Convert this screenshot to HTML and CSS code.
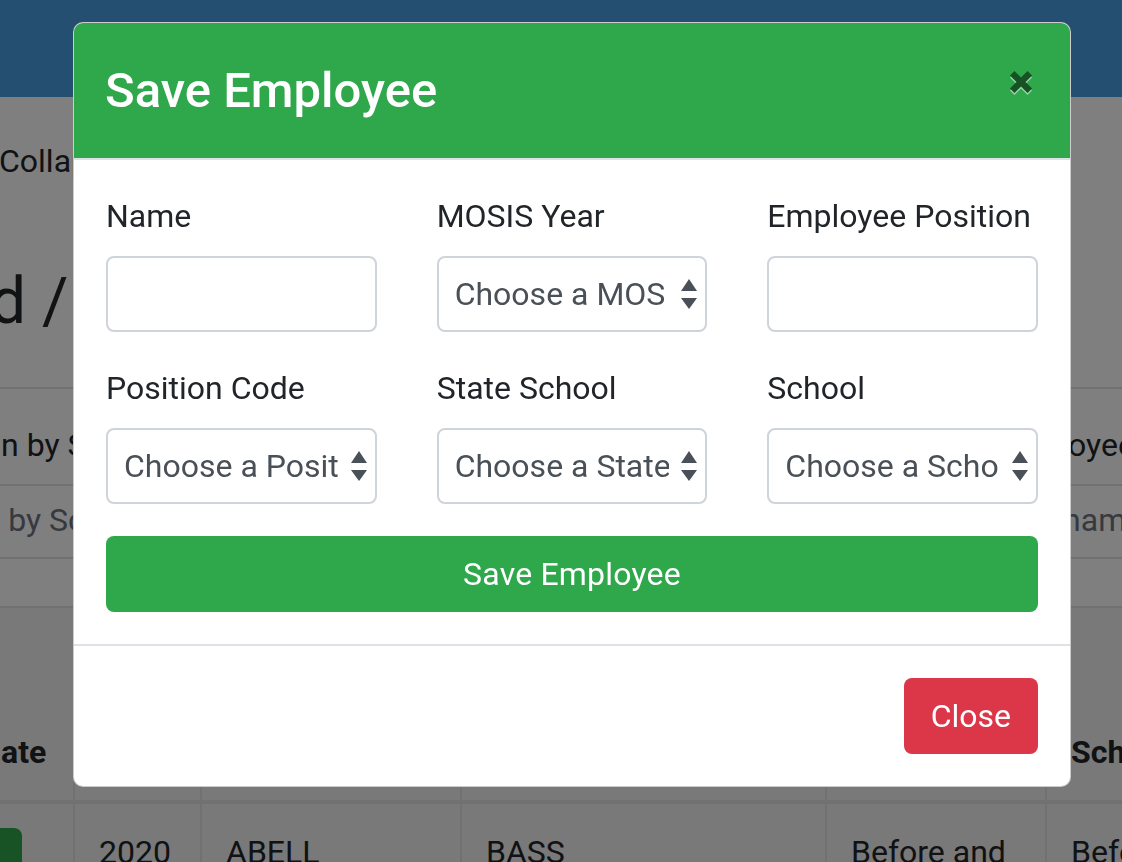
FILE: index.html
```html
<!DOCTYPE html>
<html lang="en">
<head>
<meta charset="utf-8">
<title>Save Employee</title>
<link rel="stylesheet" href="styles.css">
</head>
<body>
<div class="page">
  <nav class="navbar"></nav>
  <div class="collapse-row">Collapse</div>
  <h2 class="crumb">d / Employees</h2>
  <div class="filters">
    <div class="frow r1">
      <span class="f-left">Position by School</span>
      <span class="f-right">Employee</span>
    </div>
    <div class="frow r2">
      <span class="f-left ph">Search by School</span>
      <span class="f-right ph">Search by name</span>
    </div>
  </div>
  <table class="emp-table">
    <colgroup>
      <col class="c0"><col class="c1"><col class="c2"><col class="c3"><col class="c4"><col class="c5">
    </colgroup>
    <thead>
      <tr>
        <th>Update</th><th>Year</th><th>Last</th><th>First</th><th>Program</th><th>School</th>
      </tr>
    </thead>
    <tbody>
      <tr>
        <td><button class="btn-edit" aria-label="Edit"></button></td>
        <td>2020</td><td>ABELL</td><td>BASS</td><td>Before and After</td><td>Before and After</td>
      </tr>
    </tbody>
  </table>
</div>

<div class="backdrop"></div>

<div class="modal" role="dialog">
  <div class="modal-header">
    <h4 class="modal-title">Save Employee</h4>
    <button class="close" aria-label="Close">
      <svg width="24" height="24" viewBox="0 0 24 24"><path d="M3.2 3.2 L20.8 20.8 M20.8 3.2 L3.2 20.8" stroke="#000" stroke-width="6.4" fill="none"/></svg>
    </button>
  </div>
  <div class="modal-body">
    <div class="form-grid">
      <div class="form-group">
        <label class="lbl">Name</label>
        <input class="form-control" type="text">
      </div>
      <div class="form-group">
        <label class="lbl">MOSIS Year</label>
        <div class="select-wrap">
          <select class="form-select"><option>Choose a MOS</option></select>
          <svg class="arrows" width="16" height="30" viewBox="0 0 16 30"><path d="M8 0 L16 12 L0 12 Z M0 19 L16 19 L8 30 Z" fill="#495057"/></svg>
        </div>
      </div>
      <div class="form-group">
        <label class="lbl">Employee Position</label>
        <input class="form-control" type="text">
      </div>
      <div class="form-group">
        <label class="lbl">Position Code</label>
        <div class="select-wrap">
          <select class="form-select"><option>Choose a Position Code</option></select>
          <svg class="arrows" width="16" height="30" viewBox="0 0 16 30"><path d="M8 0 L16 12 L0 12 Z M0 19 L16 19 L8 30 Z" fill="#495057"/></svg>
        </div>
      </div>
      <div class="form-group">
        <label class="lbl">State School</label>
        <div class="select-wrap">
          <select class="form-select"><option>Choose a State School</option></select>
          <svg class="arrows" width="16" height="30" viewBox="0 0 16 30"><path d="M8 0 L16 12 L0 12 Z M0 19 L16 19 L8 30 Z" fill="#495057"/></svg>
        </div>
      </div>
      <div class="form-group">
        <label class="lbl">School</label>
        <div class="select-wrap">
          <select class="form-select"><option>Choose a School</option></select>
          <svg class="arrows" width="16" height="30" viewBox="0 0 16 30"><path d="M8 0 L16 12 L0 12 Z M0 19 L16 19 L8 30 Z" fill="#495057"/></svg>
        </div>
      </div>
    </div>
    <button class="btn-save">Save Employee</button>
  </div>
  <div class="modal-footer">
    <button class="btn-close">Close</button>
  </div>
</div>
</body>
</html>
```
FILE: styles.css
```css
html, body {
  margin: 0;
  padding: 0;
}
body {
  font-family: Roboto, "Liberation Sans", Arial, sans-serif;
  font-size: 32px;
  line-height: 48px;
  color: #212529;
  background: #fff;
  width: 1122px;
  height: 862px;
  overflow: hidden;
}

/* ---------- background page ---------- */
.page {
  width: 1122px;
  height: 862px;
  overflow: hidden;
}
.navbar {
  height: 97px;
  background: #489fe0;
}
.collapse-row {
  box-sizing: border-box;
  height: 166px;
  padding-top: 40px;
  margin-left: -1px;
  white-space: nowrap;
}
.crumb {
  box-sizing: border-box;
  height: 124px;
  margin: 0 0 0 -10px;
  font-size: 64px;
  line-height: 77px;
  font-weight: 400;
  white-space: nowrap;
}
.filters {
  border-top: 2px solid #dee2e6;
  border-bottom: 2px solid #dee2e6;
  margin-bottom: 47px;
}
.frow {
  display: grid;
  grid-template-columns: 900px 1fr;
  white-space: nowrap;
  overflow: hidden;
}
.frow.r1 {
  height: 95px;
  box-sizing: border-box;
  padding-top: 32px;
}
.frow.r2 {
  height: 73px;
  box-sizing: border-box;
  padding-top: 10px;
  border-top: 2px solid #dee2e6;
}
.r1 .f-left { margin-left: -98px; }
.r2 .f-left { margin-left: -98px; }
.r1 .f-right { padding-left: 96px; }
.r2 .f-right { padding-left: 16px; }
.ph { color: #6c757d; }

.emp-table {
  border-collapse: collapse;
  table-layout: fixed;
  margin-left: -82px;
  width: 1300px;
  background: #f2f2f2;
}
.c0 { width: 155px; }
.c1 { width: 127px; }
.c2 { width: 260px; }
.c3 { width: 365px; }
.c4 { width: 220px; }
.c5 { width: 173px; }
.emp-table th,
.emp-table td {
  border: 2px solid #dee2e6;
  padding: 24px;
  text-align: left;
  white-space: nowrap;
  overflow: hidden;
}
.emp-table th {
  height: 144px;
  vertical-align: bottom;
  font-weight: 700;
  border-bottom-width: 4px;
}
.emp-table td {
  vertical-align: top;
  white-space: normal;
}
.btn-edit {
  display: block;
  width: 78px;
  height: 76px;
  border: 0;
  border-radius: 8px;
  background: #2fa74b;
}

.backdrop {
  position: fixed;
  inset: 0;
  background: rgba(0, 0, 0, 0.5);
}

/* ---------- modal ---------- */
.modal {
  position: fixed;
  top: 22px;
  left: 73px;
  width: 998px;
  box-sizing: border-box;
  background: #fff;
  border: 1px solid rgba(0, 0, 0, 0.2);
  border-radius: 10px;
  overflow: hidden;
}
.modal-header {
  display: flex;
  align-items: flex-start;
  background: #2fa74b;
  padding: 32px 32px 31px 31px;
  border-bottom: 2px solid #dee2e6;
}
.modal-title {
  margin: 0;
  font-size: 49px;
  line-height: 72px;
  font-weight: 500;
  color: #fff;
}
.close {
  margin: 15px 5px 0 auto;
  padding: 0;
  border: 0;
  background: transparent;
  opacity: 0.5;
  line-height: 0;
}
.close svg {
  display: block;
  filter: drop-shadow(0 2px 0 #fff);
}
.modal-body {
  padding: 32px;
}
.form-grid {
  display: grid;
  grid-template-columns: repeat(3, 1fr);
  column-gap: 60px;
}
.form-group {
  margin-bottom: 32px;
  min-width: 0;
}
.lbl {
  display: block;
  margin-bottom: 16px;
  font-size: 32px;
  line-height: 48px;
  color: #212529;
}
.form-control,
.form-select {
  display: block;
  width: 100%;
  height: 76px;
  box-sizing: border-box;
  border: 2px solid #ced4da;
  border-radius: 8px;
  background: #fff;
  font-family: inherit;
  font-size: 32px;
  color: #495057;
  margin: 0;
}
.form-control {
  padding: 12px 24px;
}
.form-select {
  -webkit-appearance: none;
  appearance: none;
  padding: 0 36px 0 16px;
}
.select-wrap {
  position: relative;
}
.arrows {
  position: absolute;
  right: 10px;
  top: 23px;
  pointer-events: none;
}
.btn-save {
  display: block;
  width: 100%;
  height: 76px;
  border: 0;
  border-radius: 8px;
  background: #2fa74b;
  color: #fff;
  font-family: inherit;
  font-size: 32px;
  letter-spacing: 0.2px;
}
.modal-footer {
  display: flex;
  justify-content: flex-end;
  padding: 24px;
  border-top: 2px solid #dee2e6;
}
.btn-close {
  margin: 8px;
  height: 76px;
  padding: 0 27px;
  border: 0;
  border-radius: 8px;
  background: #db3749;
  color: #fff;
  font-family: inherit;
  font-size: 32px;
}
```
